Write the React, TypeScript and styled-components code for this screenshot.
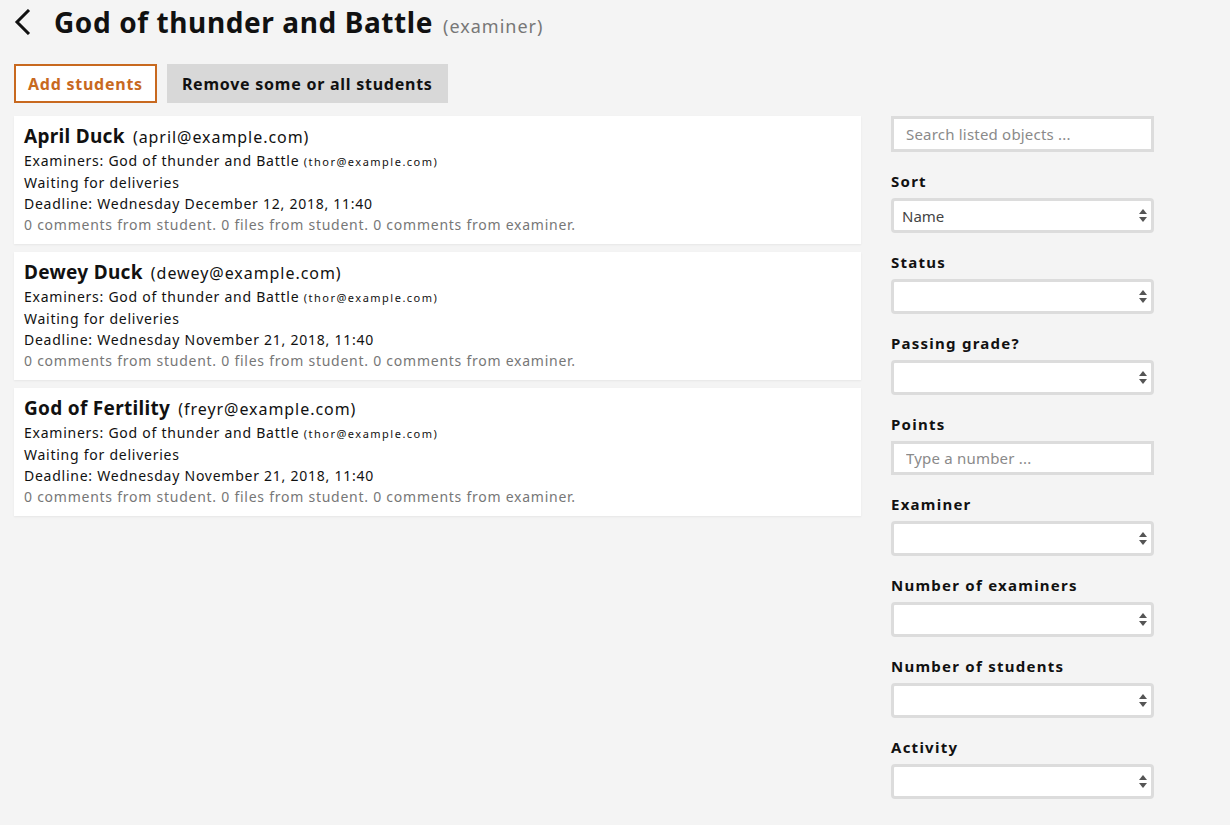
import React from "react";
import styled, { createGlobalStyle } from "styled-components";

const GlobalStyle = createGlobalStyle`
  body {
    margin: 0;
    background: #f4f4f4;
    font-family: "Noto Sans", "Lato", sans-serif;
    color: #111;
  }
`;

const Page = styled.div`
  padding: 0 14px;
`;

const Header = styled.div`
  display: flex;
  align-items: baseline;
  height: 44px;
`;

const BackLink = styled.a`
  display: flex;
  align-self: center;
  width: 40px;
  color: #111;
`;

const Title = styled.h1`
  margin: 0;
  font-size: 28px;
  font-weight: 700;
  line-height: 44px;
  letter-spacing: 0.6px;
`;

const Role = styled.span`
  margin-left: 10px;
  font-size: 18px;
  color: #777;
  letter-spacing: 1px;
`;

const ButtonBar = styled.div`
  display: flex;
  gap: 10px;
  margin-top: 20px;
`;

const Button = styled.button<{ $primary?: boolean }>`
  height: 39px;
  padding: 0 ${(p) => (p.$primary ? "12px" : "13px")};
  border: ${(p) => (p.$primary ? "2px solid #c8691f" : "2px solid #d8d8d8")};
  background: ${(p) => (p.$primary ? "#fff" : "#d8d8d8")};
  color: ${(p) => (p.$primary ? "#c8691f" : "#111")};
  font-family: inherit;
  font-size: 16px;
  font-weight: 700;
  letter-spacing: 0.75px;
  cursor: pointer;
`;

const Main = styled.div`
  display: grid;
  grid-template-columns: 847px 263px;
  gap: 30px;
  margin-top: 13px;
`;

const List = styled.div`
  display: flex;
  flex-direction: column;
  gap: 8px;
`;

const Card = styled.div`
  background: #fff;
  padding: 7px 10px 9px;
  box-shadow: 0 1px 2px rgba(0, 0, 0, 0.06);
  height: 128px;
  box-sizing: border-box;
`;

const Name = styled.div`
  font-size: 16px;
  line-height: 26px;
  letter-spacing: 0.95px;
  b {
    font-size: 19px;
    font-weight: 700;
    letter-spacing: 0.3px;
    margin-right: 3px;
  }
`;

const Line = styled.div<{ $muted?: boolean }>`
  font-size: 14px;
  line-height: 21px;
  letter-spacing: 0.75px;
  color: ${(p) => (p.$muted ? "#777" : "#111")};
  small {
    font-size: 11px;
    letter-spacing: 1.5px;
  }
`;

const Sidebar = styled.div`
  display: flex;
  flex-direction: column;
`;

const Field = styled.div`
  display: flex;
  flex-direction: column;
  margin-top: 20px;
`;

const Label = styled.label`
  font-size: 15px;
  font-weight: 700;
  letter-spacing: 1.25px;
  line-height: 18px;
  margin-bottom: 8px;
`;

const TextInput = styled.input<{ $short?: boolean }>`
  box-sizing: border-box;
  width: 100%;
  height: ${(p) => (p.$short ? "34px" : "36px")};
  border: 3px solid #dcdcdc;
  background: #fff;
  padding: 0 12px;
  font-family: inherit;
  font-size: 15px;
  letter-spacing: 0.2px;
  outline: none;
  &::placeholder {
    color: #8a8a8a;
  }
`;

const SelectWrap = styled.div`
  position: relative;
  height: 35px;
`;

const Select = styled.select`
  box-sizing: border-box;
  width: 100%;
  height: 35px;
  appearance: none;
  border: 3px solid #dcdcdc;
  border-radius: 4px;
  background: #fff;
  padding: 0 8px;
  font-family: inherit;
  font-size: 15px;
  color: #444;
  outline: none;
`;

const Arrows = styled.svg`
  position: absolute;
  right: 7px;
  top: 11px;
  pointer-events: none;
`;

const students = [
  { name: "April Duck", email: "april@example.com", deadline: "Wednesday December 12, 2018, 11:40" },
  { name: "Dewey Duck", email: "dewey@example.com", deadline: "Wednesday November 21, 2018, 11:40" },
  { name: "God of Fertility", email: "freyr@example.com", deadline: "Wednesday November 21, 2018, 11:40" },
];

const filters: { label: string; value?: string }[] = [
  { label: "Sort", value: "Name" },
  { label: "Status" },
  { label: "Passing grade?" },
  { label: "Points" },
  { label: "Examiner" },
  { label: "Number of examiners" },
  { label: "Number of students" },
  { label: "Activity" },
];

const SelectField = ({ value }: { value?: string }) => (
  <SelectWrap>
    <Select defaultValue={value || ""}>
      <option value={value || ""}>{value || ""}</option>
    </Select>
    <Arrows width="8" height="13" viewBox="0 0 8 13">
      <path d="M4 0 L8 5 L0 5 Z" fill="#555" />
      <path d="M4 13 L8 8 L0 8 Z" fill="#555" />
    </Arrows>
  </SelectWrap>
);

export default function App() {
  return (
    <Page>
      <GlobalStyle />
      <Header>
        <BackLink href="#">
          <svg width="20" height="26" viewBox="0 0 20 26">
            <path d="M15 1 L3 13 L15 25" fill="none" stroke="#111" strokeWidth="3" />
          </svg>
        </BackLink>
        <Title>God of thunder and Battle</Title>
        <Role>(examiner)</Role>
      </Header>
      <ButtonBar>
        <Button $primary>Add students</Button>
        <Button>Remove some or all students</Button>
      </ButtonBar>
      <Main>
        <List>
          {students.map((s) => (
            <Card key={s.email}>
              <Name>
                <b>{s.name}</b> ({s.email})
              </Name>
              <Line>
                Examiners: God of thunder and Battle <small>(thor@example.com)</small>
              </Line>
              <Line>Waiting for deliveries</Line>
              <Line>Deadline: {s.deadline}</Line>
              <Line $muted>0 comments from student. 0 files from student. 0 comments from examiner.</Line>
            </Card>
          ))}
        </List>
        <Sidebar>
          <TextInput placeholder="Search listed objects ..." />
          {filters.map((f) => (
            <Field key={f.label}>
              <Label>{f.label}</Label>
              {f.label === "Points" ? (
                <TextInput $short placeholder="Type a number ..." />
              ) : (
                <SelectField value={f.value} />
              )}
            </Field>
          ))}
        </Sidebar>
      </Main>
    </Page>
  );
}
